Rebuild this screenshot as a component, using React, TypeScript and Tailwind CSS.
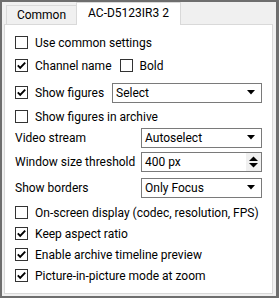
import type { ReactNode } from 'react';

const font = { fontFamily: 'Roboto, "Noto Sans", sans-serif' };

function Checkbox({ checked }: { checked?: boolean }) {
  return (
    <div className="w-[13px] h-[13px] shrink-0 border border-[#333333] bg-white flex items-center justify-center">
      {checked && (
        <svg width="11" height="11" viewBox="0 0 11 11">
          <path d="M1.8 5.4 L4.2 7.9 L9.2 2.6" fill="none" stroke="#000" strokeWidth="1.9" />
        </svg>
      )}
    </div>
  );
}

function CheckRow({ label, checked, className = '' }: { label: string; checked?: boolean; className?: string }) {
  return (
    <div className={`flex items-center ${className}`}>
      <Checkbox checked={checked} />
      <span className="ml-[7px]">{label}</span>
    </div>
  );
}

function Combo({ value, width }: { value: string; width: string }) {
  return (
    <div className={`ml-auto h-[20px] ${width} border border-[#7a7a7a] bg-white flex items-center pl-[3px] pr-[6px]`}>
      <span className="flex-1">{value}</span>
      <svg width="8" height="5" viewBox="0 0 8 5">
        <path d="M0 0 H8 L4 4.5 Z" fill="#000" />
      </svg>
    </div>
  );
}

function Row({ children, className = '' }: { children: ReactNode; className?: string }) {
  return <div className={`flex items-center h-[21px] whitespace-nowrap ${className}`}>{children}</div>;
}

export default function App() {
  return (
    <div className="w-[279px] h-[298px] bg-[#6e6e6e] pt-[2px] pl-[2px] pr-[3px] pb-[2px] text-[12px] text-black" style={font}>
      <div className="h-full bg-[#f0f0f0] pl-[2px] pr-[3px] pb-[2px] flex flex-col">
        <div className="h-[22px] flex items-end pl-[2px] shrink-0 whitespace-nowrap">
          <div className="h-[19px] w-[71px] border border-b-0 border-[#d9d9d9] bg-[#f0f0f0] flex items-center justify-center">
            Common
          </div>
          <div className="h-[23px] w-[105px] -ml-px -mb-px relative z-10 border border-b-0 border-[#d9d9d9] bg-white flex items-center justify-center pb-[2px]">
            AC-D5123IR3 2
          </div>
        </div>
        <div className="flex-1 border border-[#d9d9d9] bg-white pl-[10px] pr-[10px] pt-[7px] flex flex-col">
          <Row>
            <CheckRow label="Use common settings" />
          </Row>
          <Row className="mt-[2px]">
            <CheckRow label="Channel name" checked />
            <CheckRow label="Bold" className="ml-[8px]" />
          </Row>
          <Row className="mt-[6px]">
            <CheckRow label="Show figures" checked />
            <Combo value="Select" width="w-[150px]" />
          </Row>
          <Row className="mt-[3px]">
            <CheckRow label="Show figures in archive" />
          </Row>
          <Row>
            <span>Video stream</span>
            <Combo value="Autoselect" width="w-[121px]" />
          </Row>
          <Row className="mt-[3px]">
            <span>Window size threshold</span>
            <div className="ml-auto h-[20px] w-[121px] border border-[#7a7a7a] bg-white flex items-center pl-[3px]">
              <span className="flex-1">400 px</span>
              <div className="h-full w-[15px] bg-[#f0f0f0] flex items-center justify-center">
                <svg width="9" height="12" viewBox="0 0 9 12">
                  <path d="M0 5 H9 L4.5 0.5 Z" fill="#000" />
                  <path d="M0 7 H9 L4.5 11.5 Z" fill="#000" />
                </svg>
              </div>
            </div>
          </Row>
          <Row className="mt-[5px]">
            <span>Show borders</span>
            <Combo value="Only Focus" width="w-[121px]" />
          </Row>
          <Row className="mt-[4px] h-[20px]">
            <CheckRow label="On-screen display (codec, resolution, FPS)" />
          </Row>
          <Row className="h-[20px]">
            <CheckRow label="Keep aspect ratio" checked />
          </Row>
          <Row className="h-[20px]">
            <CheckRow label="Enable archive timeline preview" checked />
          </Row>
          <Row className="h-[21px]">
            <CheckRow label="Picture-in-picture mode at zoom" checked />
          </Row>
        </div>
      </div>
    </div>
  );
}
